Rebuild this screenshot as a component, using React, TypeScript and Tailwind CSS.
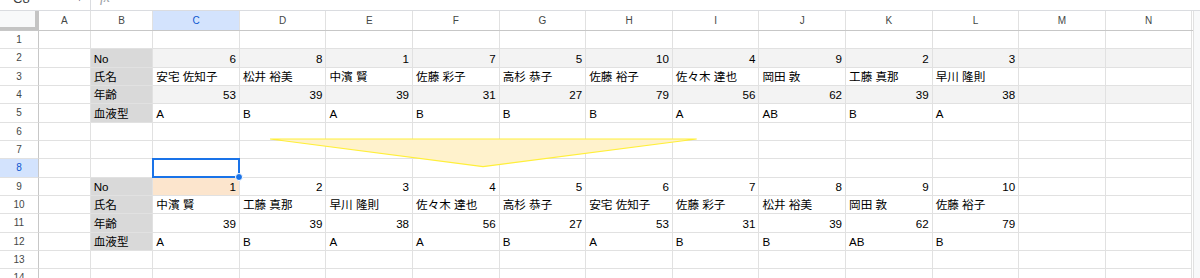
import React from "react";

type Cell = { t?: string; r?: boolean; bg?: string };

const topNo = [6, 8, 1, 7, 5, 10, 4, 9, 2, 3];
const topName = ["安宅 佐知子", "松井 裕美", "中濱 賢", "佐藤 彩子", "高杉 恭子", "佐藤 裕子", "佐々木 達也", "岡田 敦", "工藤 真那", "早川 隆則"];
const topAge = [53, 39, 39, 31, 27, 79, 56, 62, 39, 38];
const topBlood = ["A", "B", "A", "B", "B", "B", "A", "AB", "B", "A"];

const botNo = [1, 2, 3, 4, 5, 6, 7, 8, 9, 10];
const botName = ["中濱 賢", "工藤 真那", "早川 隆則", "佐々木 達也", "高杉 恭子", "安宅 佐知子", "佐藤 彩子", "松井 裕美", "岡田 敦", "佐藤 裕子"];
const botAge = [39, 39, 38, 56, 27, 53, 31, 39, 62, 79];
const botBlood = ["A", "B", "A", "A", "B", "A", "B", "B", "AB", "B"];

const DARK = "bg-[#d9d9d9]";
const LIGHT = "bg-[#f3f3f3]";
const PEACH = "bg-[#fce5cd]";

function emptyRow(): Cell[] {
  return Array.from({ length: 14 }, () => ({}));
}

function dataRow(label: string, vals: (string | number)[], num: boolean, fill?: string, firstFill?: string): Cell[] {
  const row: Cell[] = [{}, { t: label, bg: DARK }];
  vals.forEach((v, i) => {
    row.push({ t: String(v), r: num, bg: i === 0 && firstFill ? firstFill : fill });
  });
  row.push({ bg: fill });
  row.push({ bg: fill });
  return row;
}

const rows: Cell[][] = [
  emptyRow(),
  dataRow("No", topNo, true, LIGHT),
  dataRow("氏名", topName, false),
  dataRow("年齢", topAge, true, LIGHT),
  dataRow("血液型", topBlood, false),
  emptyRow(),
  emptyRow(),
  emptyRow(),
  dataRow("No", botNo, true, undefined, PEACH),
  dataRow("氏名", botName, false),
  dataRow("年齢", botAge, true),
  dataRow("血液型", botBlood, false),
  emptyRow(),
  emptyRow(),
];

const colLetters = ["A", "B", "C", "D", "E", "F", "G", "H", "I", "J", "K", "L", "M", "N"];

function colWidth(i: number) {
  if (i === 0) return "w-[51.7px]";
  if (i === 1) return "w-[62.6px]";
  return "w-[86.6px]";
}

export default function App() {
  return (
    <div
      className="relative h-[278px] w-[1200px] overflow-hidden bg-white text-black"
      style={{ fontFamily: '"Liberation Sans", Arial, "Noto Sans CJK JP", sans-serif' }}
    >
      {/* formula bar (cut off at the top of the capture) */}
      <div className="h-[11px] overflow-hidden border-b border-[#dadce0]">
        <div className="-mt-[14px] flex h-[24px] items-center">
          <span className="ml-[13px] w-[60px] text-[13px] leading-none text-[#3c4043]">C8</span>
          <span className="ml-[2px] text-[9px] leading-none text-[#5f6368]">▼</span>
          <div className="ml-[6px] h-[24px] w-px bg-[#dadce0]" />
          <span className="ml-[9px] font-['Liberation_Serif'] text-[14px] italic leading-none text-[#9aa0a6]">fx</span>
        </div>
      </div>

      <div className="flex">
        <div className="relative flex w-[1192.5px] flex-col">
          {/* column header */}
          <div className="flex h-[20px] border-b border-[#c7c7c7]">
            <div className="w-[39px] border-r-[4px] border-b-[3px] border-[#c4c4c4] bg-[#f8f9fa]" />
            {colLetters.map((c, i) => (
              <div
                key={c}
                className={`${colWidth(i)} flex shrink-0 items-center justify-center border-r border-[#e1e1e1] text-[10px] ${
                  c === "C" ? "bg-[#d3e3fd] text-[#0b57d0]" : "bg-white text-[#444746]"
                }`}
              >
                {c}
              </div>
            ))}
          </div>

          {rows.map((row, ri) => (
            <div key={ri} className={`flex h-[18.33px] shrink-0 ${ri === 7 ? "relative z-10" : ""}`}>
              <div
                className={`flex w-[39px] shrink-0 items-center justify-center border-r border-b border-r-[#c7c7c7] border-b-[#e1e1e1] text-[10px] ${
                  ri === 7 ? "bg-[#d3e3fd] text-[#0b57d0]" : "bg-white text-[#444746]"
                }`}
              >
                {ri + 1}
              </div>
              {row.map((cell, ci) => {
                const selected = ri === 7 && ci === 2;
                return (
                  <div
                    key={ci}
                    className={`${colWidth(ci)} relative flex shrink-0 items-end whitespace-nowrap border-r border-b border-[#e1e1e1] px-[3px] pb-[1px] text-[11.6px] leading-[15px] ${
                      cell.r ? "justify-end" : "justify-start"
                    } ${cell.bg ?? "bg-white"} ${selected ? "z-10" : ""}`}
                  >
                    {cell.t}
                    {selected && (
                      <>
                        <div className="pointer-events-none absolute -top-[1px] -left-[1px] -right-[1px] -bottom-[1px] border-2 border-[#1a73e8]" />
                        <div className="absolute -right-[4px] -bottom-[4px] h-[8px] w-[8px] rounded-full border border-white bg-[#1a73e8]" />
                      </>
                    )}
                  </div>
                );
              })}
            </div>
          ))}
        </div>
        <div className="flex-1 border-l border-[#e1e1e1] bg-[#f8f9fa]" />
      </div>

      {/* arrow shape lying over the grid */}
      <svg className="pointer-events-none absolute left-[268px] top-[136px] z-20" width="432" height="34" viewBox="0 0 432 34">
        <polygon points="2,3 428.7,3 215,30.7" fill="#fff2cc" stroke="#ffef3a" strokeWidth="1.2" />
      </svg>
    </div>
  );
}
